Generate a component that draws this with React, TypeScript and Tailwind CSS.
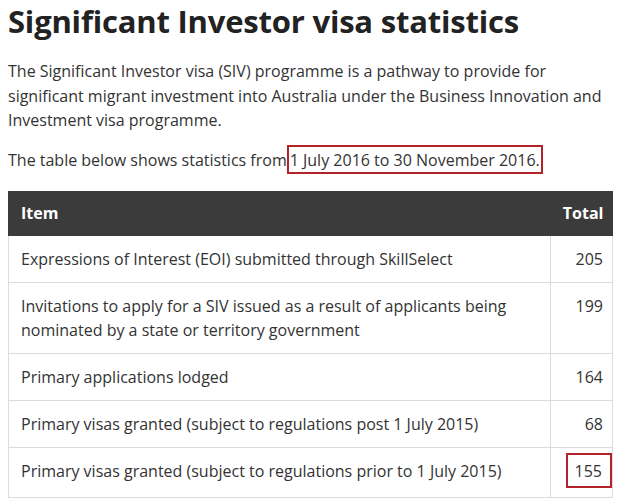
import React from "react";

const rows = [
  { item: "Expressions of Interest (EOI) submitted through SkillSelect", total: "205" },
  {
    item: "Invitations to apply for a SIV issued as a result of applicants being nominated by a state or territory government",
    total: "199",
  },
  { item: "Primary applications lodged", total: "164" },
  { item: "Primary visas granted (subject to regulations post 1 July 2015)", total: "68" },
  { item: "Primary visas granted (subject to regulations prior to 1 July 2015)", total: "155", marked: true },
];

const App = () => {
  return (
    <div className="bg-white w-[640px] h-[499px] overflow-hidden px-2 pt-[3px] text-[#333] font-['Open_Sans',sans-serif]">
      <h1 className="text-[31px] font-bold leading-[36px] text-[#222] tracking-[-0.2px]">
        Significant Investor visa statistics
      </h1>
      <p className="mt-[20px] text-[16px] leading-[24.5px] pr-6">
        The Significant Investor visa (SIV) programme is a pathway to provide for significant migrant investment into
        Australia under the Business Innovation and Investment visa programme.
      </p>
      <p className="mt-[14px] text-[16px] leading-[26px]">
        The table below shows statistics from
        <span className="border-2 border-[#b4222c] px-[1px] pt-[2px] pb-[1px]">1 July 2016 to 30 November 2016.</span>
      </p>
      <table className="mt-[18px] w-[605px] border-collapse text-[16px] leading-[24px]">
        <thead>
          <tr className="bg-[#3b3b3b] text-white">
            <th className="text-left font-bold px-3 py-[9.5px] border border-[#3b3b3b]">Item</th>
            <th className="text-right font-bold w-[62px] px-[9px] py-[9.5px] border-l border-l-[#dcdcdc] border-y border-[#3b3b3b]">
              Total
            </th>
          </tr>
        </thead>
        <tbody>
          {rows.map((r) => (
            <tr key={r.item}>
              <td className="align-top px-3 py-[11px] border border-[#dcdcdc] pr-10">{r.item}</td>
              <td className="align-top text-right border border-[#dcdcdc] px-[9px] py-[11px]">
                {r.marked ? (
                  <span className="inline-block border-2 border-[#b4222c] -mr-[9px] -mt-[10px] -mb-[2px] pl-[7px] pr-[8px] pt-[4px] pb-[3px]">
                    {r.total}
                  </span>
                ) : (
                  r.total
                )}
              </td>
            </tr>
          ))}
        </tbody>
      </table>
    </div>
  );
};

export default App;
